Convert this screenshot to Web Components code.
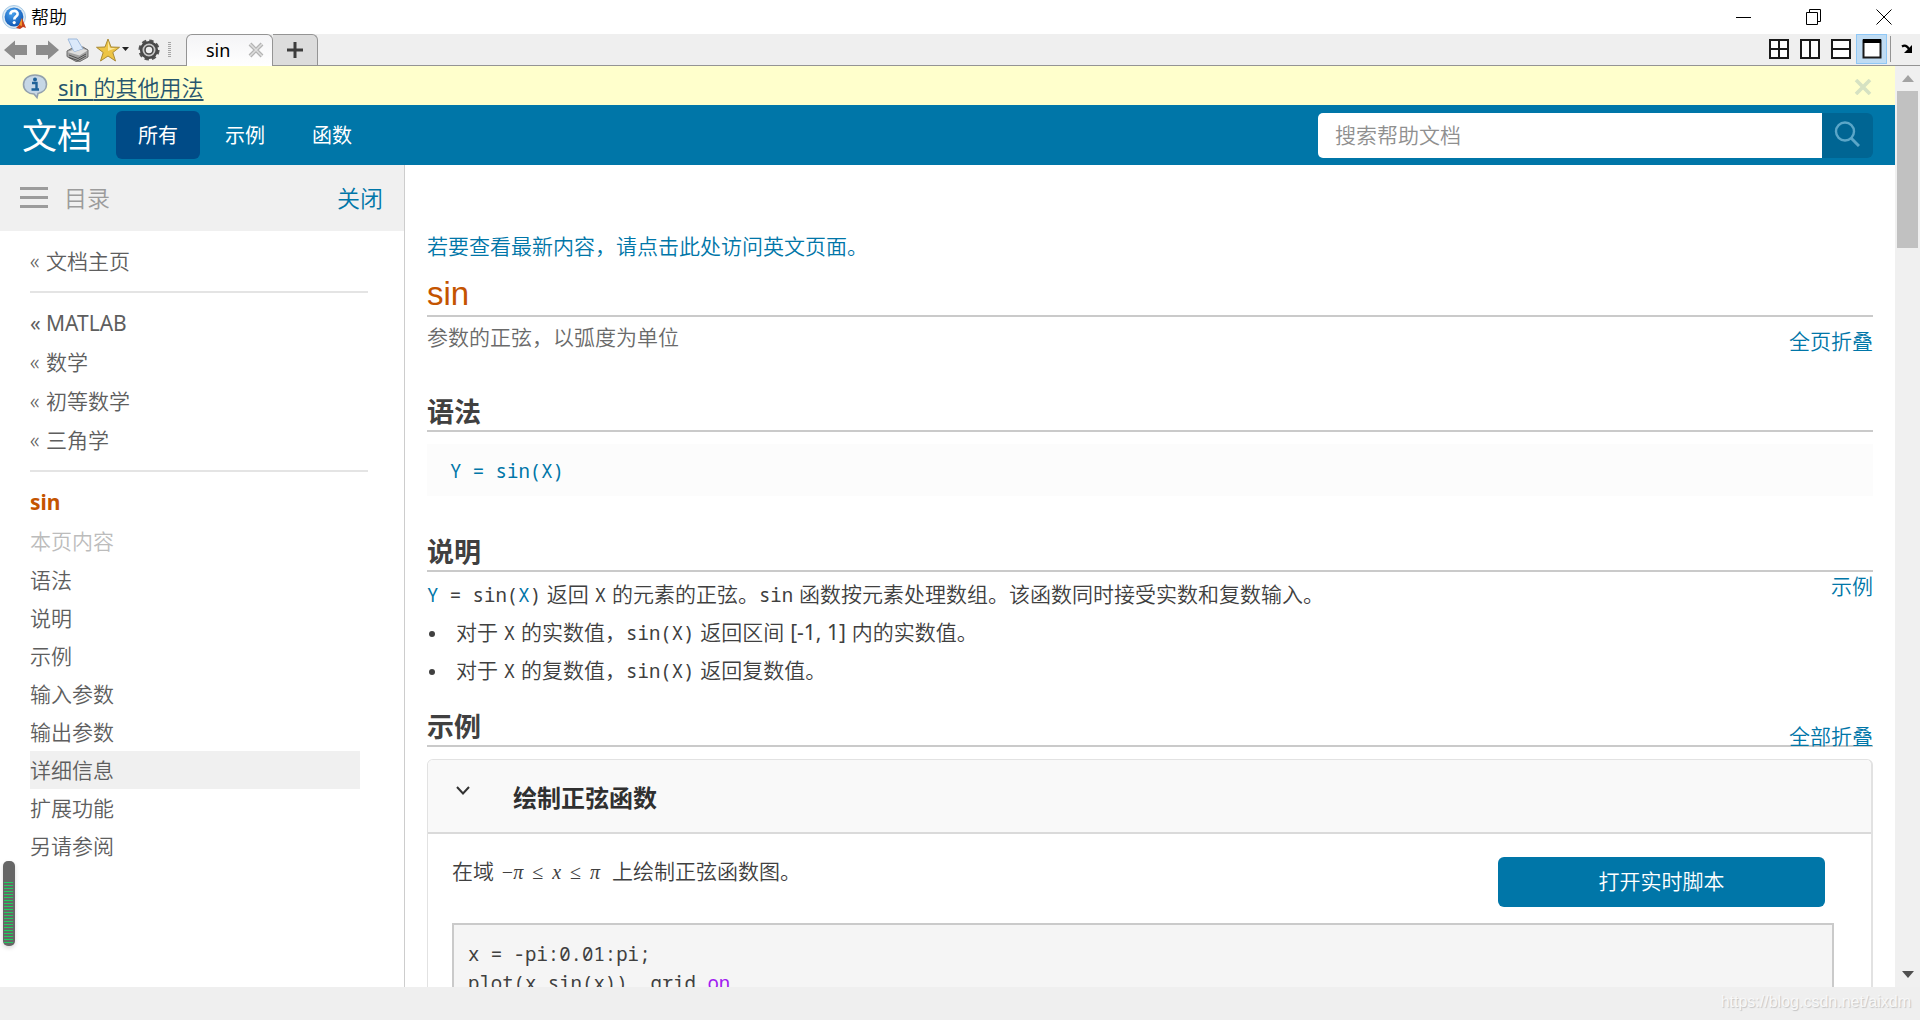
<!DOCTYPE html>
<html lang="zh-CN">
<head>
<meta charset="utf-8">
<title>帮助</title>
<style>
  html, body { margin: 0; height: 100%; }
  body {
    overflow: hidden;
    background: #fff;
    font-family: "Noto Sans", "Noto Sans CJK SC", sans-serif;
    font-size: 21px;
    font-weight: 350;
    color: #404040;
    --blue: #0076a8;
    --rule: #cacaca;
    --chrome: #efefef;
    --ui: "Noto Sans", "Noto Sans CJK SC", sans-serif;
    --doc: "Liberation Sans", "Noto Sans CJK SC", sans-serif;
    --mono: "Noto Sans Mono", "DejaVu Sans Mono", monospace;
  }
</style>
</head>
<body>
<help-window></help-window>

<script>
const define = (name, html) => customElements.define(name, class extends HTMLElement {
  constructor() {
    super();
    const t = document.createElement('template');
    t.innerHTML = `<style>
      *, *::before { box-sizing: border-box; }
      button { font: inherit; color: inherit; background: none; border: 0; padding: 0; margin: 0; display: flex; align-items: center; justify-content: center; }
      a { color: inherit; text-decoration: none; }
      svg { display: block; flex: none; }
      ul { list-style: none; margin: 0; padding: 0; }
      h1, h2, h3, p, pre { margin: 0; }
    </style>` + html;
    this.attachShadow({ mode: 'open' }).append(t.content.cloneNode(true));
  }
});

define('title-bar', `
<style>
  :host { display: flex; align-items: center; height: 34px; padding-right: 1px; background: #fff; color: #000; font-size: 18px; }
  .name { margin-left: 5px; flex: 1; line-height: 34px; }
  svg.logo { margin-left: 2px; }
  button { width: 70px; height: 32px; }
</style>
<svg class="logo" width="24" height="26" viewBox="0 0 24 26">
  <defs><radialGradient id="g" cx=".4" cy=".3" r=".8"><stop offset="0" stop-color="#4aa3ee"/><stop offset="1" stop-color="#0a4fae"/></radialGradient></defs>
  <circle cx="12" cy="13" r="11.5" fill="#dceaf5" stroke="#a9cbe6"/>
  <circle cx="12" cy="13" r="9.4" fill="url(#g)"/>
  <path d="M8.4 10.4c0-4.6 7.6-4.6 7.2-.2-.2 2.400-3.300 2.500-3.300 5.200" fill="none" stroke="#fff" stroke-width="2.600"/>
  <circle cx="12.200" cy="18.600" r="1.600" fill="#fff"/>
  <path d="M14 24l3-3 3-7 4 10-3-1-3 2z" fill="#c43e1c"/><path d="M20 14l-3 7 3 1z" fill="#f0932b"/>
</svg>
<span class="name">帮助</span>
<button aria-label="最小化"><svg width="16" height="16" viewBox="0 0 16 16"><path d="M0 8.500h15" stroke="#000"/></svg></button>
<button aria-label="还原"><svg width="16" height="16" viewBox="0 0 16 16" fill="none" stroke="#000"><path d="M.5 3.500h11v12H.5zM3.500 3.500V.5h11v12h-3"/></svg></button>
<button aria-label="关闭窗口"><svg width="16" height="16" viewBox="0 0 16 16" stroke="#000"><path d="M.5.5l15 15M15.500.5l-15 15"/></svg></button>
`);

define('tool-bar', `
<style>
  :host { display: flex; height: 32px; background: var(--chrome); border-bottom: 1px solid #949494; color: #000; font-size: 18px; font-weight: 400; }
  .tools { display: flex; align-items: center; padding-left: 4px; gap: 7px; width: 186px; flex: none; }
  .star { gap: 2px; }
  .grip { width: 3px; height: 16px; background: repeating-linear-gradient(#a5a5a5 0 1px, transparent 1px 2px); }
  .tabs { display: flex; flex: 1; }
  .tab { display: flex; align-items: center; width: 87px; height: 32px; padding: 0 9px 2px 19px; gap: 18px; background: linear-gradient(#f4f4f6, #fff); border: 1px solid #949494; border-bottom: 0; border-radius: 6px 6px 0 0; line-height: 28px; }
  .add { width: 45px; height: 31px; background: #dcdcdc; border: 1px solid #949494; border-left: 0; border-bottom: 0; border-radius: 0 6px 0 0; }
  .views { display: flex; align-items: flex-start; }
  .views button { width: 31px; height: 30px; border: 1px solid transparent; }
  .views button.on { background: #c0dcf3; border-color: #90c8f6; }
  .views button.dock { width: 30px; height: 26px; border: 0; border-left: 1px solid #949494; margin: 2px 0 0 3px; padding-left: 3px; }
</style>
<div class="tools">
  <button aria-label="后退"><svg width="24" height="20" viewBox="0 0 24 20"><path d="M0 10L11 .5v4.500h12v10H11v4.500z" fill="#8c8c8c"/></svg></button>
  <button aria-label="前进"><svg width="24" height="20" viewBox="0 0 24 20"><path d="M24 10L13 .5v4.500H1v10h12v4.500z" fill="#8c8c8c"/></svg></button>
  <button aria-label="打印"><svg width="23" height="24" viewBox="0 0 23 24">
    <path d="M1 13l7-4h9l5 3v7l-9 5-3-.5-9-5z" fill="#a2a2a2" stroke="#6f6f6f"/>
    <path d="M2 1l9 0 6 10-9 3z" fill="#dbe9fa" stroke="#9db9dc"/>
    <path d="M1.500 14l5-2 2 2 9-3 4 1.500-8 5z" fill="#dedede"/><path d="M3 17l9 3.500 8-4.500M3 19.500l9 3 8-4.500" fill="none" stroke="#4e4e4e"/></svg></button>
  <button class="star" aria-label="收藏夹"><svg width="24" height="24" viewBox="0 0 24 24"><path d="M12 1l3 8 8.500.3-6.700 5.200 2.700 8.500-7.500-5-7.500 5 2.700-8.500L.5 9.300 9 9z" fill="#edc445" stroke="#a88a35"/><path d="M12 3l2 7h6l-8 3z" fill="#fbe79a"/></svg>
    <svg width="8" height="5" viewBox="0 0 8 5"><path d="M0 0h7L3.500 4z" fill="#222"/></svg></button>
  <button aria-label="设置"><svg width="24" height="24" viewBox="0 0 24 24"><circle cx="12" cy="12" r="9.300" fill="none" stroke="#555" stroke-width="2.600" stroke-dasharray="4.300 3"/><circle cx="12" cy="12" r="7.800" fill="#c8c8c8" stroke="#4a4a4a" stroke-width="2.600"/><circle cx="12" cy="12" r="4" fill="#efefef" stroke="#4a4a4a" stroke-width="1.600"/></svg></button>
  <span class="grip"></span>
</div>
<div class="tabs">
  <div class="tab"><span>sin</span><button aria-label="关闭标签页"><svg width="16" height="16" viewBox="0 0 16 16"><path d="M2 2l12 12M14 2L2 14" stroke="#b4b4b4" stroke-width="4"/><path d="M2 2l12 12M14 2L2 14" stroke="#dedede" stroke-width="1.500"/></svg></button></div>
  <button class="add" aria-label="新建标签页"><svg width="16" height="16" viewBox="0 0 16 16"><path d="M8 0v16M0 8h16" stroke="#3c3c3c" stroke-width="3"/></svg></button>
</div>
<div class="views">
  <button aria-label="平铺"><svg width="20" height="20" viewBox="0 0 20 20" fill="#fff" stroke="#1a1a1a" stroke-width="2"><path d="M1 1h18v18H1zM10 1v18M1 10h18"/></svg></button>
  <button aria-label="左右"><svg width="20" height="20" viewBox="0 0 20 20" fill="#fff" stroke="#1a1a1a" stroke-width="2"><path d="M1 1h18v18H1zM10 1v18"/></svg></button>
  <button aria-label="上下"><svg width="20" height="20" viewBox="0 0 20 20" fill="#fff" stroke="#1a1a1a" stroke-width="2"><path d="M1 1h18v18H1zM1 10h18"/></svg></button>
  <button class="on" aria-label="单个"><svg width="20" height="20" viewBox="0 0 20 20"><path d="M1.500 1.500h17v17h-17z" fill="#fff" stroke="#1a1a1a" stroke-width="2"/><path d="M1 0h18v4H1z" fill="#000"/></svg></button>
  <button class="dock" aria-label="停靠"><svg width="12" height="10" viewBox="0 0 12 10"><path d="M1 2.500Q5 0 8 5" fill="none" stroke="#000" stroke-width="2.200"/><path d="M11 1v8H3z" fill="#000"/></svg></button>
</div>
`);

define('info-banner', `
<style>
  :host { display: flex; align-items: center; height: 39px; padding: 3px 23px 0 22px; background: #ffffcc; color: #27566f; font-size: 22px; }
  a { flex: 1; margin-left: 10px; line-height: 32px; }
  a span { text-decoration: underline; text-decoration-thickness: 2px; text-underline-offset: 3px; }
  b { font-weight: 400; }
</style>
<svg width="26" height="26" viewBox="0 0 26 26">
  <path d="M13 1C6 1 1.500 5.200 1.500 10.500S6 20 12 20l3 3.500 1-4c5-1 8.500-4.500 8.500-9C24.500 5 20 1 13 1z" fill="#c6d7e6" stroke="#93a1ad" stroke-width="1.600"/>
  <circle cx="13" cy="5.500" r="2" fill="#1f6298"/><path d="M10 9h4.500v6M9.500 15.500h7.500" fill="none" stroke="#1f6298" stroke-width="2.400"/></svg>
<a href="#"><span><b>sin </b>的其他用法</span></a>
<button aria-label="关闭提示"><svg width="18" height="16" viewBox="0 0 18 16"><path d="M2 1l14 14M16 1L2 15" stroke="#d6e2c2" stroke-width="3.600"/></svg></button>
`);

define('doc-header', `
<style>
  :host { display: flex; align-items: center; height: 60px; padding: 0 22px; background: var(--blue); color: #fff; font-size: 20px; font-weight: 400; }
  .brand { font-size: 35px; height: 48px; line-height: 50px; width: 94px; }
  nav { display: flex; gap: 3px; flex: 1; }
  nav a { width: 84px; height: 48px; text-align: center; line-height: 50px; border-radius: 6px; }
  nav a.on { background: #004b87; }
  form { display: flex; width: 555px; height: 45px; }
  input { flex: 1; min-width: 0; border: 0; margin: 0; padding: 0 17px; border-radius: 5px 0 0 5px; font: inherit; font-size: 21px; font-weight: 350; color: #404040; outline: 0; }
  input::placeholder { color: #8f8f8f; opacity: 1; }
  button { width: 51px; background: #006593; border-radius: 0 6px 6px 0; padding: 0 2px 2px 0; }
</style>
<a class="brand" href="#">文档</a>
<nav><a class="on" href="#">所有</a><a href="#">示例</a><a href="#">函数</a></nav>
<form><input type="text" aria-label="搜索帮助文档" placeholder="搜索帮助文档"><button type="button" aria-label="搜索"><svg width="26" height="26" viewBox="0 0 26 26" fill="none" stroke="#5ba6c8"><circle cx="11" cy="10.500" r="9" stroke-width="2.400"/><path d="M17 17l8 8" stroke-width="3"/></svg></button></form>
`);

define('toc-head', `
<style>
  :host { display: flex; align-items: center; height: 66px; padding: 0 21px 0 20px; background: #f0f0f0; color: #9c9c9c; font-size: 23px; }
  span { flex: 1; margin-left: 16px; line-height: 30px; }
  a { color: var(--blue); line-height: 30px; }
</style>
<button aria-label="切换目录"><svg width="28" height="22" viewBox="0 0 28 22"><path d="M0 1.500h28M0 10.500h28M0 19.500h28" stroke="#9c9c9c" stroke-width="3"/></svg></button>
<span>目录</span><a href="#">关闭</a>
`);

define('toc-link', `
<style>
  :host { display: block; line-height: 39px; color: #5e5e5e; }
  :host([small]) { line-height: 38px; }
  :host([hover]) { background: #f0f0f0; margin-right: 8px; }
  :host([up]) a::before { content: "«"; display: inline-block; width: 16px; }
</style>
<a href="#"><slot></slot></a>
`);

define('doc-toc', `
<style>
  :host { display: block; width: 405px; flex: none; border-right: 1px solid #cdcdcd; }
  nav { padding: 11px 36px 0 30px; }
  .group { padding-bottom: 10px; border-bottom: 2px solid #e4e4e4; margin-bottom: 11px; }
  .latin { font-weight: 400; }
  .sin { color: #c45400; font-weight: 700; }
  .label { color: #bcbcbc; }
</style>
<toc-head></toc-head>
<nav>
  <div class="group"><toc-link up>文档主页</toc-link></div>
  <div class="group"><toc-link up class="latin">MATLAB</toc-link><toc-link up>数学</toc-link><toc-link up>初等数学</toc-link><toc-link up>三角学</toc-link></div>
  <toc-link class="sin">sin</toc-link>
  <toc-link class="label">本页内容</toc-link>
  <toc-link small>语法</toc-link><toc-link small>说明</toc-link><toc-link small>示例</toc-link><toc-link small>输入参数</toc-link><toc-link small>输出参数</toc-link><toc-link small hover>详细信息</toc-link><toc-link small>扩展功能</toc-link><toc-link small>另请参阅</toc-link>
</nav>
`);

define('section-title', `
<style>
  :host { display: flex; align-items: flex-end; border-bottom: 2px solid var(--rule); font-size: 27px; font-weight: 700; }
  h2 { font: inherit; flex: 1; line-height: 34px; }
  ::slotted(a) { color: var(--blue); text-decoration: none; font-size: 21px; line-height: 16px; font-weight: 350; }
</style>
<h2><slot></slot></h2><slot name="action"></slot>
`);

define('example-card', `
<style>
  :host { display: block; border: 1px solid #e2e2e2; border-right-width: 2px; border-radius: 6px 6px 0 0; }
  header { display: flex; height: 74px; background: #f9f9f9; border-bottom: 2px solid #dadada; border-radius: 5px 5px 0 0; }
  header button { width: 26px; height: 20px; margin: 20px 37px 0 22px; }
  h3 { font-size: 24px; line-height: 36px; font-weight: 700; color: #303030; margin-top: 21px; }
  .body { padding: 23px 37px 0 24px; }
  .row { display: flex; justify-content: space-between; }
  p { line-height: 30px; }
  .math { font-family: "Liberation Serif", serif; font-size: 20px; font-weight: 400; margin: 0 6px 0 2px; }
  .math span { margin: 0 4px; }
  .open { width: 327px; height: 50px; margin-right: 9px; border-radius: 6px; background: var(--blue); color: #fff; }
  pre { margin-top: 16px; padding: 15px 14px; border: 2px solid var(--rule); background: #f5f5f5; font: 400 19px/29px var(--mono); height: 160px; }
  .kw { color: #a020f0; }
</style>
<header><button aria-label="折叠"><svg width="14" height="9" viewBox="0 0 14 9"><path d="M1 1l6 6.500L13 1" fill="none" stroke="#333" stroke-width="2"/></svg></button><h3><slot></slot></h3></header>
<div class="body">
  <div class="row"><p>在域 <span class="math">−<i>π</i> <span>≤</span> <i>x</i> <span>≤</span> <i>π</i></span> 上绘制正弦函数图。</p><button class="open">打开实时脚本</button></div>
<pre>x = -pi:0.01:pi;
plot(x,sin(x)), grid <span class="kw">on</span></pre>
</div>
`);

define('doc-article', `
<style>
  :host { display: block; flex: 1; min-width: 0; padding: 67px 22px 0; font-family: var(--doc); line-height: 30px; }
  a { color: var(--blue); }
  .latest { display: block; }
  h1 { margin-top: 12px; padding-bottom: 1px; font-size: 33px; line-height: 40px; font-weight: 400; color: #c45400; border-bottom: 2px solid var(--rule); }
  .split { display: flex; justify-content: space-between; align-items: flex-start; }
  .purpose { padding-top: 6px; color: #6a6a6a; }
  .purpose a { margin-top: 4px; }
  .syntax { margin: 12px 0 40px; padding: 0 23px; height: 52px; background: #fcfcfc; line-height: 54px; color: var(--blue); }
  code { font-family: var(--mono); font-size: 19px; font-weight: 400; line-height: 1; }
  code b { font-weight: 400; color: var(--blue); }
  .num { font-family: var(--ui); font-weight: 400; line-height: 1; }
  .text { padding-top: 8px; }
  li { display: flex; margin-top: 8px; }
  li::before { content: ""; width: 6px; height: 6px; border-radius: 3px; background: #404040; margin: 13px 21px 0 2px; }
  section-title.first { margin-top: 39px; }
  section-title.ex { margin-top: 25px; }
  example-card { margin-top: 12px; }
</style>
<a class="latest" href="#">若要查看最新内容，请点击此处访问英文页面。</a>
<h1>sin</h1>
<div class="split purpose"><p>参数的正弦，以弧度为单位</p><a href="#">全页折叠</a></div>
<section-title class="first">语法</section-title>
<div class="syntax"><code>Y = sin(X)</code></div>
<section-title>说明</section-title>
<div class="split">
  <div class="text">
    <p><code><b>Y</b> = sin(<b>X</b>)</code> 返回 <code>X</code> 的元素的正弦。<code>sin</code> 函数按元素处理数组。该函数同时接受实数和复数输入。</p>
    <ul>
      <li><span>对于 <code>X</code> 的实数值，<code>sin(X)</code> 返回区间 <span class="num">[-1, 1]</span> 内的实数值。</span></li>
      <li><span>对于 <code>X</code> 的复数值，<code>sin(X)</code> 返回复数值。</span></li>
    </ul>
  </div>
  <a href="#">示例</a>
</div>
<section-title class="ex">示例<a slot="action" href="#">全部折叠</a></section-title>
<example-card>绘制正弦函数</example-card>
`);

define('scroll-rail', `
<style>
  :host { display: flex; flex-direction: column; align-items: center; width: 25px; flex: none; background: #f0f0f0; }
  button { width: 25px; height: 25px; }
  .track { flex: 1; width: 21px; }
  .thumb { height: 18%; background: #c1c1c1; }
</style>
<button aria-label="向上滚动"><svg width="12" height="7" viewBox="0 0 12 7"><path d="M0 7L6 0l6 7z" fill="#a3a3a3"/></svg></button>
<div class="track"><div class="thumb"></div></div>
<button aria-label="向下滚动"><svg width="12" height="7" viewBox="0 0 12 7"><path d="M0 0h12L6 7z" fill="#505050"/></svg></button>
`);

define('level-meter', `
<style>
  :host { display: block; width: 12px; height: 85px; box-sizing: border-box; padding: 21px 2px 2px 1px; border-radius: 5px; background: #666; box-shadow: 0 2px 4px rgba(0,0,0,.15); }
  div { height: 100%; background: repeating-linear-gradient(#20cf5e 0 1px, transparent 1px 3px); }
</style>
<div></div>
`);

define('status-strip', `
<style>
  :host { display: block; height: 33px; box-sizing: border-box; padding-right: 9px; background: var(--chrome); text-align: right; font: 400 16px/30px var(--doc); color: #f8f8f8; text-shadow: 1px 1px 1px #c4c4c4; }
</style>
<span>https://blog.csdn.net/aixdm</span>
`);

define('help-window', `
<style>
  :host { display: flex; flex-direction: column; height: 100vh; position: relative; }
  .view { display: flex; flex: 1; min-height: 0; }
  .page { display: flex; flex-direction: column; flex: 1; min-width: 0; overflow: hidden; }
  .cols { display: flex; flex: 1; min-height: 0; }
  info-banner, doc-header { flex: none; box-sizing: border-box; }
  level-meter { position: absolute; left: 3px; bottom: 74px; }
</style>
<title-bar></title-bar>
<tool-bar></tool-bar>
<div class="view">
  <div class="page">
    <info-banner></info-banner>
    <doc-header></doc-header>
    <div class="cols"><doc-toc></doc-toc><doc-article></doc-article></div>
  </div>
  <scroll-rail></scroll-rail>
</div>
<status-strip></status-strip>
<level-meter></level-meter>
`);
</script>
</body>
</html>
